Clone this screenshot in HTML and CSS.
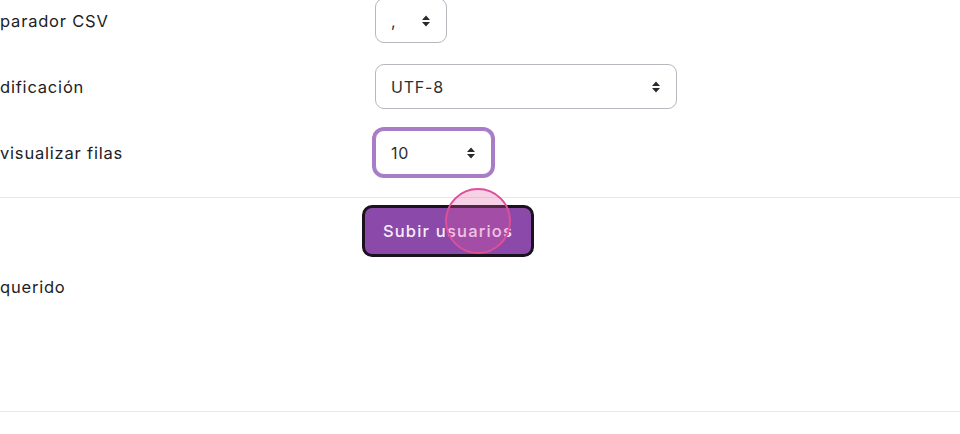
FILE: index.html
```html
<!DOCTYPE html>
<html lang="es">
<head>
<meta charset="utf-8">
<title>Subir usuarios</title>
<link rel="stylesheet" href="styles.css">
</head>
<body>
<div class="page">
  <div class="form">
    <div class="row">
      <div class="lbl">parador CSV</div>
      <div class="ctl">
        <div class="select sel-sep"><span class="val">,</span>
          <svg class="arrows" width="10" height="12" viewBox="0 0 10 12"><path d="M5 0.5 L9 5 H1 Z M5 11.5 L9 7 H1 Z" fill="#2b2b2b"/></svg>
        </div>
      </div>
    </div>
    <div class="row">
      <div class="lbl">dificación</div>
      <div class="ctl">
        <div class="select sel-enc"><span class="val">UTF-8</span>
          <svg class="arrows" width="10" height="12" viewBox="0 0 10 12"><path d="M5 0.5 L9 5 H1 Z M5 11.5 L9 7 H1 Z" fill="#2b2b2b"/></svg>
        </div>
      </div>
    </div>
    <div class="row">
      <div class="lbl">visualizar filas</div>
      <div class="ctl">
        <div class="select sel-rows focus"><span class="val">10</span>
          <svg class="arrows" width="10" height="12" viewBox="0 0 10 12"><path d="M5 0.5 L9 5 H1 Z M5 11.5 L9 7 H1 Z" fill="#2b2b2b"/></svg>
        </div>
      </div>
    </div>
  </div>
  <div class="divider"></div>
  <div class="actions">
    <div class="btn-wrap">
      <button class="btn">Subir usuarios</button>
      <span class="click-dot"></span>
    </div>
  </div>
  <div class="req">querido</div>
  <div class="divider bottom"></div>
</div>
</body>
</html>
```

FILE: styles.css
```css
* { box-sizing: border-box; }
html, body { margin: 0; padding: 0; background: #ffffff; }
body {
  font-family: "Inter", "Open Sans", sans-serif;
  font-size: 16.5px;
  letter-spacing: 0.8px;
  color: #1d2125;
  width: 960px;
  height: 434px;
  overflow: hidden;
}
.page { display: flex; flex-direction: column; }
.form {
  display: flex;
  flex-direction: column;
  gap: 21px;
  margin-top: -2px;
}
.row {
  display: grid;
  grid-template-columns: 375px 1fr;
  align-items: center;
}
.lbl { line-height: 22px; }
.select {
  height: 45px;
  border: 1px solid #b5b8bc;
  border-radius: 9px;
  display: flex;
  align-items: center;
  justify-content: space-between;
  padding: 0 15px 0 15px;
  color: #2c2f33;
  background: #fff;
  font-size: 16px;
}
.sel-sep { width: 72px; }
.sel-enc { width: 302px; }
.sel-rows { width: 117px; }
.select.focus {
  border-color: #a97cc7;
  box-shadow: 0 0 0 3px #a97cc7;
}
.val { line-height: 20px; }
.arrows { display: block; flex: none; }
.divider { height: 1px; background: #e8e8e8; margin-top: 22px; }
.actions {
  display: grid;
  grid-template-columns: 362px 1fr;
  padding-top: 7px;
}
.btn-wrap { grid-column: 2; position: relative; width: 172px; }
.btn {
  width: 172px;
  height: 52px;
  border: 3px solid #1b1220;
  border-radius: 10px;
  background: #8b49a9;
  color: #f6ecfa;
  font-family: inherit;
  font-size: 16.5px;
  letter-spacing: 1.2px;
  font-weight: 500;
  padding: 0;
}
.click-dot {
  position: absolute;
  left: 83px;
  top: -17px;
  width: 66px;
  height: 66px;
  border-radius: 50%;
  border: 2px solid #df4f98;
  background: rgba(226, 90, 160, 0.28);
}
.req { margin-top: 19px; line-height: 22px; }
.divider.bottom { margin-top: 113px; }
```
